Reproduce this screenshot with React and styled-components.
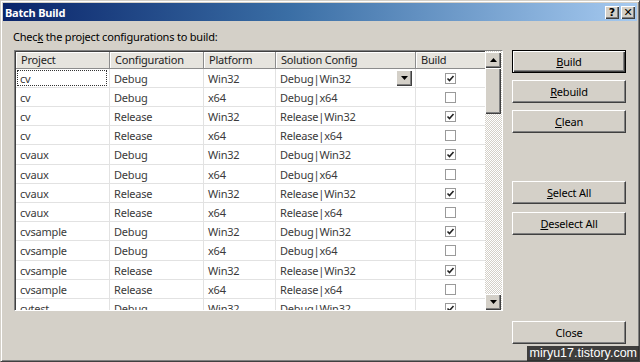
import React from 'react';
import styled, { createGlobalStyle } from 'styled-components';

const FONT = '"Noto Sans", "Open Sans", sans-serif';
const FS = '11px';
const LS = '-0.2px';

const Global = createGlobalStyle`
  html, body { margin: 0; padding: 0; background: #d4d0c8; }
  body { font-family: ${FONT}; letter-spacing: ${LS}; }
`;

const Frame = styled.div`
  position: relative;
  width: 640px;
  height: 362px;
  box-sizing: border-box;
  background: #d4d0c8;
  border: 1px solid;
  border-color: #d4d0c8 #404040 #404040 #d4d0c8;
  box-shadow: inset 1px 1px #fff, inset -1px -1px #808080;
  padding: 2px;
  display: flex;
  flex-direction: column;
  overflow: hidden;
`;

const TitleBar = styled.div`
  height: 18px;
  flex: none;
  display: flex;
  align-items: center;
  justify-content: space-between;
  padding: 0 2px 0 2px;
  background: linear-gradient(to right, #0a246a 0%, #3a6ea5 45%, #a6caf0 100%);
`;

const Title = styled.span`
  color: #fff;
  font: bold 11px ${FONT};
  letter-spacing: ${LS};
`;

const CaptionButtons = styled.div`
  display: flex;
  gap: 2px;
`;

const CaptionBtn = styled.div`
  width: 14px;
  height: 13px;
  box-sizing: border-box;
  background: #d4d0c8;
  box-shadow: inset 1px 1px #fff, inset -1px -1px #404040, inset -2px -2px #808080;
  display: flex;
  align-items: center;
  justify-content: center;
  font: bold 11px "DejaVu Sans", sans-serif;
  letter-spacing: 0;
  color: #000;
  line-height: 1;
`;

const Body = styled.div`
  flex: 1;
  padding: 8px 11px 0 11px;
  display: flex;
  flex-direction: column;
`;

const Label = styled.div`
  font-size: ${FS};
  line-height: 16px;
  color: #000;
  margin-bottom: 5px;
  margin-left: -1px;
  u { text-decoration: underline; }
`;

const Main = styled.div`
  display: flex;
  gap: 9px;
  height: 294px;
`;

const GridBox = styled.div`
  width: 489px;
  height: 261px;
  box-sizing: border-box;
  border: 1px solid;
  border-color: #808080 #fff #fff #808080;
  box-shadow: inset 1px 1px #404040;
  background: #fff;
  display: flex;
  overflow: hidden;
`;

const Table = styled.div`
  flex: 1;
  display: flex;
  flex-direction: column;
  padding: 1px 0 0 1px;
  overflow: hidden;
`;

const cols = '94px 94px 72px 140px 70px';

const HeaderRow = styled.div`
  display: grid;
  grid-template-columns: ${cols};
  height: 17px;
  flex: none;
`;

const HeaderCell = styled.div`
  box-sizing: border-box;
  background: #e6e4de;
  border-right: 1px solid #8c8c8c;
  border-bottom: 1px solid #8c8c8c;
  box-shadow: inset 1px 1px #fff;
  font-size: ${FS};
  line-height: 16px;
  padding-left: 5px;
  color: #222;
  white-space: nowrap;
  overflow: hidden;
`;

const Row = styled.div`
  display: grid;
  grid-template-columns: ${cols};
  height: ${p => p.$h}px;
  flex: none;
`;

const Cell = styled.div`
  position: relative;
  box-sizing: border-box;
  border-right: 1px solid #e2e2e2;
  border-bottom: 1px solid #e2e2e2;
  font-size: ${FS};
  padding-left: 4px;
  color: #3a3a3a;
  white-space: nowrap;
  display: flex;
  align-items: center;
  justify-content: ${p => (p.$center ? 'center' : 'flex-start')};
  ${p => p.$center && 'padding-left: 0;'}
`;

const Focus = styled.div`
  position: absolute;
  inset: 1px 2px 1px 1px;
  border: 1px dotted #333;
  pointer-events: none;
`;

const DropBtn = styled.div`
  position: absolute;
  right: 3px;
  top: 1px;
  width: 16px;
  height: 16px;
  box-sizing: border-box;
  background: #d4d0c8;
  box-shadow: inset 1px 1px #fff, inset -1px -1px #404040, inset -2px -2px #808080;
  display: flex;
  align-items: center;
  justify-content: center;
`;

const Check = styled.div`
  width: 11px;
  height: 11px;
  box-sizing: border-box;
  border: 1px solid #9a9a9a;
  background: #fff;
  display: flex;
  align-items: center;
  justify-content: center;
`;

const ScrollBar = styled.div`
  width: 17px;
  flex: none;
  display: flex;
  flex-direction: column;
  background: repeating-conic-gradient(#d4d0c8 0 25%, #ffffff 0 50%) 0 0 / 2px 2px;
  padding-top: 1px;
`;

const ScrollBtn = styled.div`
  width: 16px;
  height: 16px;
  flex: none;
  box-sizing: border-box;
  background: #d4d0c8;
  box-shadow: inset 1px 1px #fff, inset -1px -1px #404040, inset -2px -2px #808080;
  display: flex;
  align-items: center;
  justify-content: center;
`;

const Thumb = styled.div`
  width: 16px;
  height: 46px;
  flex: none;
  box-sizing: border-box;
  background: #d4d0c8;
  box-shadow: inset 1px 1px #fff, inset -1px -1px #404040, inset -2px -2px #808080;
`;

const Track = styled.div`
  flex: 1;
`;

const ButtonCol = styled.div`
  width: 114px;
  display: flex;
  flex-direction: column;
`;

const Btn = styled.div`
  width: 114px;
  height: 23px;
  box-sizing: border-box;
  margin-top: ${p => (p.$auto ? 'auto' : `${p.$mt || 0}px`)};
  background: #d4d0c8;
  border: 1px solid;
  border-color: ${p => (p.$default ? '#000' : '#fff #404040 #404040 #fff')};
  box-shadow: ${p =>
    p.$default
      ? 'inset 1px 1px #fff, inset -1px -1px #404040, inset -2px -2px #808080'
      : 'inset -1px -1px #808080'};
  font-size: ${FS};
  color: #000;
  display: flex;
  align-items: center;
  justify-content: center;
  u { text-decoration: underline; }
`;

const Watermark = styled.div`
  position: absolute;
  right: 0;
  bottom: 0;
  height: 15px;
  padding: 0 2px 0 3px;
  background: rgba(35, 35, 35, 0.85);
  color: #fff;
  font: 12.5px "Liberation Sans", sans-serif;
  letter-spacing: 0;
  line-height: 15px;
`;

const CheckMark = () => (
  <svg width="9" height="9" viewBox="0 0 9 9">
    <path d="M1.5 4.5 L3.5 6.5 L7.5 2" stroke="#222" strokeWidth="1.6" fill="none" />
  </svg>
);

const DownTri = () => (
  <svg width="7" height="4" viewBox="0 0 7 4">
    <path d="M0 0 H7 L3.5 4 Z" fill="#000" />
  </svg>
);

const UpTri = () => (
  <svg width="7" height="4" viewBox="0 0 7 4">
    <path d="M0 4 H7 L3.5 0 Z" fill="#000" />
  </svg>
);

const rows = [];
['cv', 'cvaux', 'cvsample'].forEach(p => {
  rows.push([p, 'Debug', 'Win32', 'Debug|Win32', true]);
  rows.push([p, 'Debug', 'x64', 'Debug|x64', false]);
  rows.push([p, 'Release', 'Win32', 'Release|Win32', true]);
  rows.push([p, 'Release', 'x64', 'Release|x64', false]);
});
rows.push(['cvtest', 'Debug', 'Win32', 'Debug|Win32', true]);

export default function App() {
  return (
    <>
      <Global />
      <Frame>
        <TitleBar>
          <Title>Batch Build</Title>
          <CaptionButtons>
            <CaptionBtn>?</CaptionBtn>
            <CaptionBtn>✕</CaptionBtn>
          </CaptionButtons>
        </TitleBar>
        <Body>
          <Label>
            Chec<u>k</u> the project configurations to build:
          </Label>
          <Main>
            <GridBox>
              <Table>
                <HeaderRow>
                  <HeaderCell>Project</HeaderCell>
                  <HeaderCell>Configuration</HeaderCell>
                  <HeaderCell>Platform</HeaderCell>
                  <HeaderCell>Solution Config</HeaderCell>
                  <HeaderCell>Build</HeaderCell>
                </HeaderRow>
                {rows.map((r, i) => (
                  <Row key={i} $h={i % 5 === 4 ? 20 : 19}>
                    <Cell>
                      {r[0]}
                      {i === 0 && <Focus />}
                    </Cell>
                    <Cell>{r[1]}</Cell>
                    <Cell>{r[2]}</Cell>
                    <Cell>
                      {r[3]}
                      {i === 0 && (
                        <DropBtn>
                          <DownTri />
                        </DropBtn>
                      )}
                    </Cell>
                    <Cell $center>
                      <Check>{r[4] && <CheckMark />}</Check>
                    </Cell>
                  </Row>
                ))}
              </Table>
              <ScrollBar>
                <ScrollBtn>
                  <UpTri />
                </ScrollBtn>
                <Thumb />
                <Track />
                <ScrollBtn>
                  <DownTri />
                </ScrollBtn>
              </ScrollBar>
            </GridBox>
            <ButtonCol>
              <Btn $default>
                <span><u>B</u>uild</span>
              </Btn>
              <Btn $mt={7}>
                <span><u>R</u>ebuild</span>
              </Btn>
              <Btn $mt={7}>
                <span><u>C</u>lean</span>
              </Btn>
              <Btn $mt={48}>
                <span><u>S</u>elect All</span>
              </Btn>
              <Btn $mt={8}>
                <span><u>D</u>eselect All</span>
              </Btn>
              <Btn $auto>Close</Btn>
            </ButtonCol>
          </Main>
        </Body>
        <Watermark>miryu17.tistory.com</Watermark>
      </Frame>
    </>
  );
}
